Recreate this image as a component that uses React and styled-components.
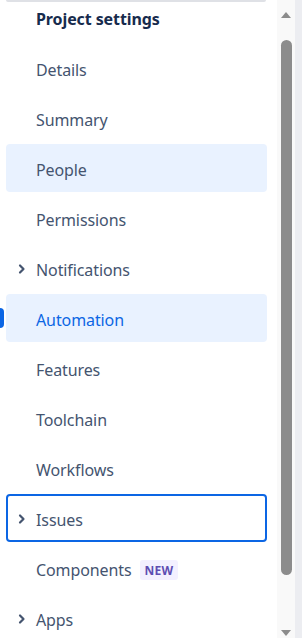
import React from "react";
import styled, { createGlobalStyle } from "styled-components";

const Global = createGlobalStyle`
  html, body { margin: 0; padding: 0; background: #ffffff; overflow: hidden; }
  body { font-family: "Noto Sans", "Open Sans", sans-serif; -webkit-font-smoothing: antialiased; }
  * { box-sizing: border-box; }
`;

const Frame = styled.div`
  display: flex;
  width: 302px;
  height: 638px;
  overflow: hidden;
`;

const Nav = styled.nav`
  width: 277px;
  flex: none;
  display: flex;
  flex-direction: column;
  padding: 0 10px 0 6px;
`;

const TopEdge = styled.div`
  height: 2px;
  width: 260px;
  flex: none;
  background: #dfe1e6;
  border-radius: 0 0 2px 2px;
`;

const Header = styled.h2`
  margin: 7px 0 0;
  height: 35px;
  flex: none;
  padding: 0 0 0 30px;
  font-size: 16px;
  line-height: 20px;
  font-weight: 700;
  color: #172b4d;
  letter-spacing: -0.1px;
`;

const List = styled.ul`
  list-style: none;
  margin: 0;
  padding: 0;
  display: flex;
  flex-direction: column;
  gap: 2px;
`;

const Item = styled.li`
  position: relative;
  height: 48px;
  flex: none;
  display: flex;
  align-items: center;
  padding: 4px 0 0 28px;
  border-radius: 4px;
  font-size: 16px;
  color: ${p => (p.$current ? "#0c66e4" : "#44546f")};
  background: ${p => (p.$selected || p.$current ? "#e9f2ff" : "transparent")};
  border: 2px solid ${p => (p.$focused ? "#0c66e4" : "transparent")};
  letter-spacing: -0.1px;
`;

const Indicator = styled.span`
  position: absolute;
  left: -8px;
  top: 12px;
  width: 4px;
  height: 20px;
  background: #0c66e4;
  border-radius: 0 4px 4px 0;
`;

const Chevron = styled.svg`
  position: absolute;
  left: 8px;
  top: 50%;
  margin-top: -6px;
  width: 12px;
  height: 14px;
`;

const Badge = styled.span`
  margin-left: 8px;
  padding: 0 5px;
  height: 20px;
  display: inline-flex;
  align-items: center;
  border-radius: 3px;
  background: #f3f0ff;
  color: #5e4db2;
  font-size: 12px;
  font-weight: 700;
  letter-spacing: 0.2px;
`;

const ScrollTrack = styled.div`
  width: 18px;
  flex: none;
  background: #f9f9f9;
  display: flex;
  flex-direction: column;
  align-items: center;
`;

const Arrow = styled.svg`
  width: 12px;
  height: 8px;
  flex: none;
  margin-top: ${p => p.$top || 0}px;
`;

const Thumb = styled.div`
  width: 11px;
  margin: 22px 0 0 1px;
  height: 535px;
  background: #8c8c8c;
  border-radius: 6px;
  flex: none;
`;

const Spacer = styled.div`
  flex: 1;
`;

const Strip = styled.div`
  flex: 1;
  background: #ecedf1;
`;

const ChevronIcon = () => (
  <Chevron viewBox="0 0 12 14">
    <path d="M4 3.5 L7.5 7 L4 10.5" fill="none" stroke="#44546f" strokeWidth="2.2" strokeLinecap="round" strokeLinejoin="round" />
  </Chevron>
);

const items = [
  { label: "Details" },
  { label: "Summary" },
  { label: "People", selected: true },
  { label: "Permissions" },
  { label: "Notifications", expandable: true },
  { label: "Automation", current: true },
  { label: "Features" },
  { label: "Toolchain" },
  { label: "Workflows" },
  { label: "Issues", expandable: true, focused: true },
  { label: "Components", badge: "NEW" },
  { label: "Apps", expandable: true },
];

export default function App() {
  return (
    <>
      <Global />
      <Frame>
        <Nav>
          <TopEdge />
          <Header>Project settings</Header>
          <List>
            {items.map(it => (
              <Item key={it.label} $selected={it.selected} $current={it.current} $focused={it.focused}>
                {it.current && <Indicator />}
                {it.expandable && <ChevronIcon />}
                {it.label}
                {it.badge && <Badge>{it.badge}</Badge>}
              </Item>
            ))}
          </List>
        </Nav>
        <ScrollTrack>
          <Arrow viewBox="0 0 12 8" $top={10}>
            <path d="M1 8 L6 2 L11 8 Z" fill="#8c8c8c" />
          </Arrow>
          <Thumb />
          <Spacer />
          <Arrow viewBox="0 0 12 8">
            <path d="M1 0 L11 0 L6 6 Z" fill="#8c8c8c" />
          </Arrow>
        </ScrollTrack>
        <Strip />
      </Frame>
    </>
  );
}
